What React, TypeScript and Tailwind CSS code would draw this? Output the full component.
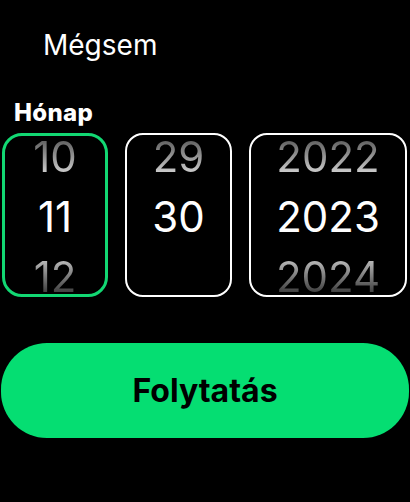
const font = { fontFamily: "Inter, 'Noto Sans', sans-serif" };

type Col = {
  prev?: string;
  value: string;
  next?: string;
  width: string;
  active?: boolean;
};

const columns: Col[] = [
  { prev: "10", value: "11", next: "12", width: "w-[106px]", active: true },
  { prev: "29", value: "30", width: "w-[107px]" },
  { prev: "2022", value: "2023", next: "2024", width: "w-[158px]" },
];

function Wheel({ col }: { col: Col }) {
  return (
    <div
      className={
        "flex h-[164px] shrink-0 flex-col items-center justify-center overflow-hidden pt-[4px] " +
        col.width +
        (col.active
          ? " rounded-[20px] border-[3px] border-[#12d873]"
          : " rounded-[18px] border-2 border-white")
      }
    >
      <div className="flex h-[60px] shrink-0 items-center bg-gradient-to-b from-[#3a3a3a] to-[#ffffff] bg-clip-text text-[42px] leading-none text-transparent">
        {col.prev ?? ""}
      </div>
      <div className="flex h-[60px] shrink-0 items-center text-[42px] leading-none text-white">
        {col.value}
      </div>
      <div className="flex h-[60px] shrink-0 items-center bg-gradient-to-b from-[#f0f0f0] via-[#7a7a7a] to-[#111] bg-clip-text text-[42px] leading-none text-transparent">
        {col.next ?? ""}
      </div>
    </div>
  );
}

export default function App() {
  return (
    <div className="flex h-[502px] w-[410px] flex-col bg-black" style={font}>
      <div className="pl-[43px] pt-[28px] text-[28px] leading-[34px] text-white">
        Mégsem
      </div>
      <div className="mt-[37px] pl-[14px] text-[24px] font-extrabold leading-[28px] tracking-[0.3px] text-white">
        Hónap
      </div>
      <div className="mt-[6px] flex gap-[17px] pl-[2px]">
        {columns.map((c) => (
          <Wheel key={c.value} col={c} />
        ))}
      </div>
      <div className="mx-[1px] mt-[46px] flex h-[95px] items-center justify-center rounded-[46px] bg-[#05de72]">
        <span className="text-[32px] font-bold text-black">Folytatás</span>
      </div>
    </div>
  );
}
